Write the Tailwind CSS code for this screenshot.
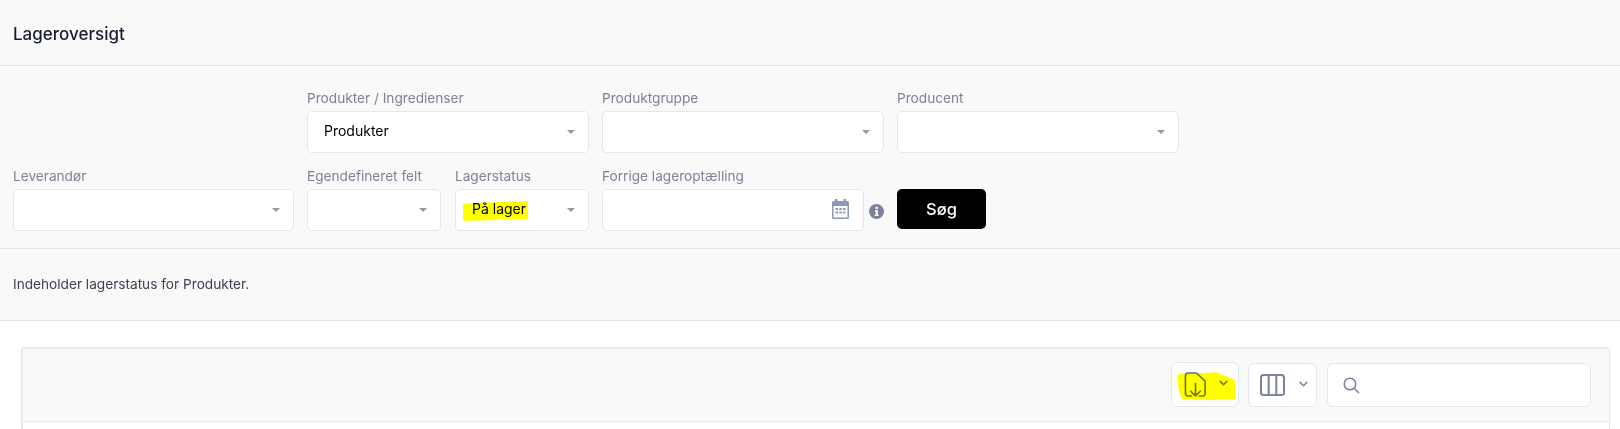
<!DOCTYPE html>
<html lang="da">
<head>
<meta charset="UTF-8">
<title>Lageroversigt</title>
<script src="https://cdn.jsdelivr.net/npm/@tailwindcss/browser@4"></script>
</head>
<body class="relative h-[429px] overflow-hidden bg-white font-['Inter',sans-serif] text-[13.65px] text-[#7e8299]">
  <div class="bg-[#f9f9f9]">
    <header class="flex h-[66px] items-center border-b border-[#e4e4e7] px-[13px] pt-[4px]">
      <h1 class="text-[17px] font-medium text-[#181c32]">Lageroversigt</h1>
    </header>

    <form class="grid grid-cols-[281px_282px_282px_282px] gap-x-[13px] gap-y-[13px] border-b border-[#e4e4e7] px-[13px] pt-[22px] pb-[17px]">
      <div class="col-start-2">
        <label class="mb-[2px] block leading-[21px]">Produkter / Ingredienser</label>
        <div class="flex h-[42px] items-center justify-between rounded-[5px] border border-[#e4e6ef] bg-white pr-[13px] pl-[16px] text-[14px] text-black">
          <span class="-mt-[3px]">Produkter</span>
          <svg class="h-[4px] w-[8px]" viewBox="0 0 8 4"><path d="M0 0h8L4 4z" fill="#999"/></svg>
        </div>
      </div>
      <div>
        <label class="mb-[2px] block leading-[21px]">Produktgruppe</label>
        <div class="flex h-[42px] items-center justify-end rounded-[5px] border border-[#e4e6ef] bg-white pr-[13px]">
          <svg class="h-[4px] w-[8px]" viewBox="0 0 8 4"><path d="M0 0h8L4 4z" fill="#999"/></svg>
        </div>
      </div>
      <div>
        <label class="mb-[2px] block leading-[21px]">Producent</label>
        <div class="flex h-[42px] items-center justify-end rounded-[5px] border border-[#e4e6ef] bg-white pr-[13px]">
          <svg class="h-[4px] w-[8px]" viewBox="0 0 8 4"><path d="M0 0h8L4 4z" fill="#999"/></svg>
        </div>
      </div>

      <div class="col-start-1">
        <label class="mb-[2px] block leading-[21px]">Leverandør</label>
        <div class="flex h-[42px] items-center justify-end rounded-[5px] border border-[#e4e6ef] bg-white pr-[13px]">
          <svg class="h-[4px] w-[8px]" viewBox="0 0 8 4"><path d="M0 0h8L4 4z" fill="#999"/></svg>
        </div>
      </div>
      <div class="grid grid-cols-[134px_134px] gap-x-[14px]">
        <div>
          <label class="mb-[2px] block leading-[21px] whitespace-nowrap">Egendefineret felt</label>
          <div class="flex h-[42px] items-center justify-end rounded-[5px] border border-[#e4e6ef] bg-white pr-[13px]">
            <svg class="h-[4px] w-[8px]" viewBox="0 0 8 4"><path d="M0 0h8L4 4z" fill="#999"/></svg>
          </div>
        </div>
        <div>
          <label class="mb-[2px] block leading-[21px]">Lagerstatus</label>
          <div class="flex h-[42px] items-center justify-between rounded-[5px] border border-[#e4e6ef] bg-white pr-[13px] pl-[16px] text-[14px] text-black">
            <span class="-mt-[3px]">På lager</span>
            <svg class="h-[4px] w-[8px]" viewBox="0 0 8 4"><path d="M0 0h8L4 4z" fill="#999"/></svg>
          </div>
        </div>
      </div>
      <div class="flex items-end">
        <div class="w-[262px]">
          <label class="mb-[2px] block leading-[21px]">Forrige lageroptælling</label>
          <div class="flex h-[42px] items-center justify-end rounded-[5px] border border-[#e4e6ef] bg-white pr-[14px]">
            <svg class="-mt-[2px] h-[20px] w-[17px]" viewBox="0 0 17 20" fill="#8a9bb8"><path d="M3 0h2.500v2h6V0H14v2h1.500A1.500 1.500 0 0 1 17 3.500v15a1.500 1.500 0 0 1-1.500 1.500h-14A1.500 1.500 0 0 1 0 18.500v-15A1.500 1.500 0 0 1 1.500 2H3zM1.500 7v11.500h14V7z"/><path d="M3.500 9h2.500v2H3.500zM7.300 9h2.500v2H7.300zM11 9h2.500v2H11zM3.500 12.500h2.500v2H3.500zM7.300 12.500h2.500v2H7.300zM11 12.500h2.500v2H11z"/></svg>
          </div>
        </div>
        <svg class="mb-[12px] ml-[5px] h-[15px] w-[15px]" viewBox="0 0 14 14"><circle cx="7" cy="7" r="7" fill="#7e8299"/><path d="M5.600 5.600h2.700v4.500h.9v1.200H5.200v-1.200h.9V6.800h-.5zM6 2.600h2.300v2H6z" fill="#f9f9f9"/></svg>
      </div>
      <div class="flex items-end pb-[2px]">
        <button type="button" class="h-[40px] w-[89px] rounded-[5px] bg-black text-[16.500px] font-medium text-white">Søg</button>
      </div>
    </form>

    <p class="flex h-[72px] items-center border-b border-[#e4e4e7] px-[13px] text-[#3f4254]">Indeholder lagerstatus for Produkter.</p>
  </div>

  <section class="mt-[26px] mr-[10px] ml-[21px] rounded-t-[4px] border-t-2 border-r border-l-2 border-[#e8e8ec]">
    <div class="flex h-[73px] items-start justify-end border-b border-[#ececef] bg-[#f9f9f9] pt-[14px] pr-[18px]">
      <button type="button" class="-mt-px flex h-[45px] w-[68px] items-center rounded-[6px] border border-[#e4e6ef] bg-white pl-[12px]">
        <svg class="h-[27px] w-[23px] shrink-0" viewBox="0 0 24 28" fill="none" stroke="#6f7486" stroke-width="1.700" stroke-linecap="round" stroke-linejoin="round"><path d="M8 26H4a2.500 2.500 0 0 1-2.500-2.500v-19A2.500 2.500 0 0 1 4 2h9l9 8.500v13A2.500 2.500 0 0 1 19.500 26H16"/><path d="M12 13v13M7 21l5 5 5-5"/></svg>
        <svg class="-mt-[3px] ml-[12px] h-[6px] w-[9px]" viewBox="0 0 8 5" fill="none" stroke="#6f7486" stroke-width="1.300"><path d="M.6.600 4 4 7.400.600"/></svg>
      </button>
      <button type="button" class="ml-[9px] flex h-[44px] w-[69px] items-center rounded-[6px] border border-[#e4e6ef] bg-white pl-[11px]">
        <svg class="h-[22px] w-[25px] shrink-0" viewBox="0 0 25 22" fill="none" stroke="#7e8299" stroke-width="2"><rect x="1" y="1" width="23" height="20" rx="2.500"/><path d="M8.700 1v20M16.300 1v20"/></svg>
        <svg class="-mt-[3px] ml-[14px] h-[6px] w-[9px]" viewBox="0 0 8 5" fill="none" stroke="#7e8299" stroke-width="1.300"><path d="M.6.600 4 4 7.400.600"/></svg>
      </button>
      <div class="ml-[10px] flex h-[44px] w-[264px] items-center rounded-[6px] border border-[#e4e6ef] bg-white pl-[15px]">
        <svg class="h-[17px] w-[17px]" viewBox="0 0 17 17" fill="none" stroke="#7e8299" stroke-width="1.500"><circle cx="7" cy="7" r="5.800"/><path d="m11.200 11.200 4.800 4.800"/></svg>
      </div>
    </div>
    <div class="h-[10px] bg-white"></div>
  </section>

  <!-- yellow marker strokes drawn on top of the screenshot -->
  <svg class="pointer-events-none absolute top-[200px] left-[462px] h-[22px] w-[67px] mix-blend-multiply" viewBox="0 0 67 22" fill="#ffff00"><path d="M1 4 12 3 66 1 66 19 34 19 33 20 1 21z"/></svg>
  <svg class="pointer-events-none absolute top-[370px] left-[1176px] h-[31px] w-[60px] mix-blend-multiply" viewBox="0 0 60 31" fill="#ffff00"><path d="M1 5 8 3 30 3 40 2 50 6 59 10 59 29 36 30 6 29 3 22z"/></svg>
</body>
</html>
